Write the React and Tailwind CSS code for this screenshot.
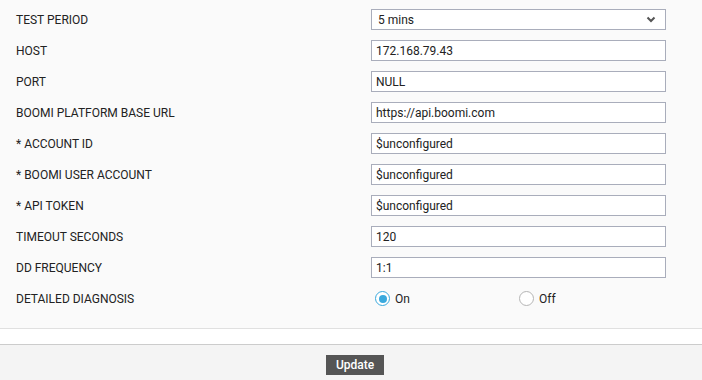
import React, { useState } from 'react';

const fields = [
  { label: 'HOST', value: '172.168.79.43' },
  { label: 'PORT', value: 'NULL' },
  { label: 'BOOMI PLATFORM BASE URL', value: 'https://api.boomi.com' },
  { label: '* ACCOUNT ID', value: '$unconfigured' },
  { label: '* BOOMI USER ACCOUNT', value: '$unconfigured' },
  { label: '* API TOKEN', value: '$unconfigured' },
  { label: 'TIMEOUT SECONDS', value: '120' },
  { label: 'DD FREQUENCY', value: '1:1' },
];

const Radio = ({ checked, label, onClick }) => (
  <button onClick={onClick} className="flex items-center gap-[5px] text-[12px] text-[#222]">
    <span
      className={`flex h-[15px] w-[15px] items-center justify-center rounded-full border ${
        checked ? 'border-[#3aa9dd]' : 'border-[#b5b5b5]'
      } bg-white`}
    >
      {checked && <span className="h-[8px] w-[8px] rounded-full bg-[#3aa9dd]" />}
    </span>
    {label}
  </button>
);

export default function App() {
  const [dd, setDd] = useState('on');

  return (
    <div className="h-[380px] w-[702px] bg-[#f4f4f4] font-['Roboto',sans-serif] text-[12px] text-[#222]">
      <div className="h-[329px] border-b border-[#e0e0e0] bg-[#fafafa] pl-4 pt-[9px]">
        <div className="grid grid-cols-[355px_295px] gap-y-[10px]">
          <div className="flex h-[21px] items-center">TEST PERIOD</div>
          <div className="flex h-[21px] items-center justify-between border border-[#a9adbb] bg-white pl-[6px] pr-[9px]">
            <span>5 mins</span>
            <svg width="10" height="7" viewBox="0 0 10 7">
              <path d="M1.5 1.5 L5 5 L8.5 1.5" fill="none" stroke="#555" strokeWidth="2" />
            </svg>
          </div>

          {fields.map((f) => (
            <React.Fragment key={f.label}>
              <div className="flex h-[21px] items-center">{f.label}</div>
              <input
                defaultValue={f.value}
                className="h-[21px] border border-[#a9adbb] bg-white px-[4px] text-[12px] text-[#222] outline-none"
              />
            </React.Fragment>
          ))}

          <div className="flex h-[21px] items-center">DETAILED DIAGNOSIS</div>
          <div className="flex h-[21px] items-center pl-[4px]">
            <div className="w-[144px]">
              <Radio checked={dd === 'on'} label="On" onClick={() => setDd('on')} />
            </div>
            <Radio checked={dd === 'off'} label="Off" onClick={() => setDd('off')} />
          </div>
        </div>
      </div>
      <div className="h-[16px] border-b border-[#cccccc] bg-white" />
      <div className="flex justify-center pl-[8px] pt-[10px]">
        <button className="h-[20px] w-[58px] bg-[#555555] text-[12px] font-medium text-white">Update</button>
      </div>
    </div>
  );
}
